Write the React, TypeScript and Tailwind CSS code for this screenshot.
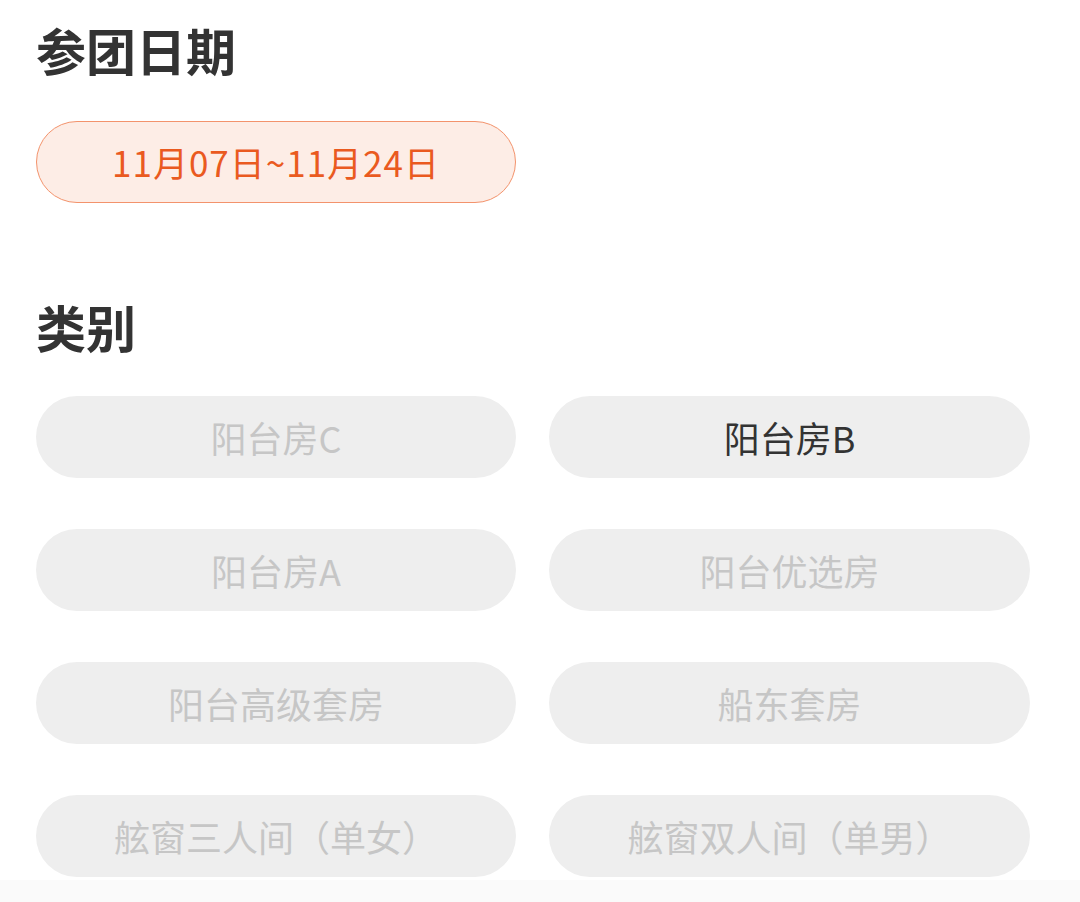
import React from 'react';

const FONT = {
  fontFamily: '"Noto Sans CJK SC", "Noto Sans", sans-serif',
};

type Cabin = { name: string; available: boolean };

const CABINS: Cabin[] = [
  { name: '阳台房C', available: false },
  { name: '阳台房B', available: true },
  { name: '阳台房A', available: false },
  { name: '阳台优选房', available: false },
  { name: '阳台高级套房', available: false },
  { name: '船东套房', available: false },
  { name: '舷窗三人间（单女）', available: false },
  { name: '舷窗双人间（单男）', available: false },
];

function SectionTitle({ children }: { children: React.ReactNode }) {
  return (
    <h2 className="text-[50px] leading-[50px] font-bold text-[#333333]">
      {children}
    </h2>
  );
}

export default function App() {
  return (
    <div className="flex h-[902px] w-[1080px] flex-col bg-white" style={FONT}>
      <div className="flex-1 px-[36px] pt-[24px]">
        <SectionTitle>参团日期</SectionTitle>
        <div className="mt-[47px] flex h-[82px] w-[480px] items-center justify-center rounded-full border border-[#f3936c] bg-[#fdede6] text-[35px] tracking-[1px] text-[#ea5a1f]">
          11月07日~11月24日
        </div>

        <div className="mt-[98px]">
          <SectionTitle>类别</SectionTitle>
        </div>
        <div className="mt-[45px] grid grid-cols-[480px_481px] gap-x-[33px] gap-y-[51px]">
          {CABINS.map((cabin) => (
            <div
              key={cabin.name}
              className={
                cabin.available
                  ? 'flex h-[82px] items-center justify-center rounded-full bg-[#eeeeee] text-[36px] text-[#333333]'
                  : 'flex h-[82px] items-center justify-center rounded-full bg-[#eeeeee] text-[36px] text-[#c6c6c6]'
              }
            >
              {cabin.name}
            </div>
          ))}
        </div>
      </div>
      <div className="h-[22px] bg-[#fafafa]" />
    </div>
  );
}
